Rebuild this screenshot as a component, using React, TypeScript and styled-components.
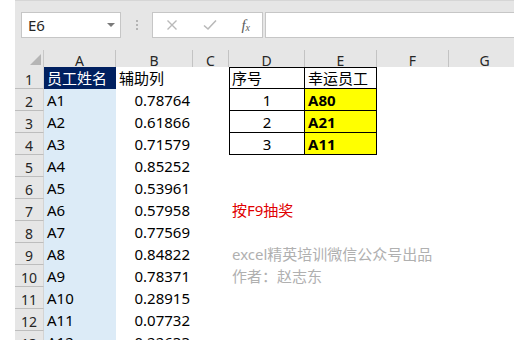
import React from "react";
import styled, { createGlobalStyle } from "styled-components";

const GlobalStyle = createGlobalStyle`
  html, body {
    margin: 0;
    padding: 0;
    background: #ffffff;
    overflow: hidden;
  }
  body {
    font-family: "Noto Sans", "Noto Sans CJK SC", sans-serif;
  }
`;

const COLS = [29, 72, 77, 36, 76, 72, 72, 72];
const LETTERS = ["A", "B", "C", "D", "E", "F", "G"];

type CellSpec = {
    t?: string;
    fill?: string;
    color?: string;
    align?: "left" | "right" | "center";
    bold?: boolean;
    box?: { top?: boolean; left?: boolean };
};

const names = ["A1", "A2", "A3", "A4", "A5", "A6", "A7", "A8", "A9", "A10", "A11", "A12"];
const values = ["0.78764", "0.61866", "0.71579", "0.85252", "0.53961", "0.57958", "0.77569", "0.84822", "0.78371", "0.28915", "0.07732", "0.22633"];
const winners = ["A80", "A21", "A11"];

function buildRows(): CellSpec[][] {
    const rows: CellSpec[][] = [];
    rows.push([
        { t: "员工姓名", fill: "#002060", color: "#ffffff" },
        { t: "辅助列" },
        {},
        { t: "序号", box: { top: true, left: true } },
        { t: "幸运员工", box: { top: true } },
        {},
        {},
    ]);
    names.forEach((name, i) => {
        const row: CellSpec[] = [
            { t: name, fill: "#dcebf7" },
            { t: values[i], align: "right" },
            {},
        ];
        if (i < 3) {
            row.push({ t: String(i + 1), align: "center", box: { left: true } });
            row.push({ t: winners[i], bold: true, fill: "#ffff00", box: {} });
        } else if (i === 5) {
            row.push({ t: "按F9抽奖", color: "#e00000" });
            row.push({});
        } else if (i === 7) {
            row.push({ t: "excel精英培训微信公众号出品", color: "#b0b0b0" });
            row.push({});
        } else if (i === 8) {
            row.push({ t: "作者：赵志东", color: "#b0b0b0" });
            row.push({});
        } else {
            row.push({});
            row.push({});
        }
        row.push({});
        row.push({});
        rows.push(row);
    });
    return rows;
}

function boxShadow(box?: { top?: boolean; left?: boolean }): string {
    if (!box) return "none";
    const parts = ["inset -1px -1px 0 #000000"];
    if (box.top) parts.push("inset 0 1px 0 #000000");
    if (box.left) parts.push("inset 1px 0 0 #000000");
    return parts.join(", ");
}

function App(): React.ReactElement {
    const rows = buildRows();

    return (
        <Page>
            <GlobalStyle />
            <LeftStrip />
            <Main>
                <Toolbar>
                    <NameBox>
                        <span>E6</span>
                        <DropArrow />
                    </NameBox>
                    <Grip>
                        <i />
                        <i />
                        <i />
                    </Grip>
                    <FormulaButtons>
                        <svg width="12" height="12" viewBox="0 0 12 12">
                            <path d="M1.5 1.5 L10.5 10.5 M10.5 1.5 L1.5 10.5" stroke="#b9b9b9" strokeWidth="1.4" fill="none" />
                        </svg>
                        <svg width="14" height="12" viewBox="0 0 14 12">
                            <path d="M1 6.5 L5 10 L13 1.5" stroke="#b9b9b9" strokeWidth="1.6" fill="none" />
                        </svg>
                        <Fx>
                            f<sub>x</sub>
                        </Fx>
                    </FormulaButtons>
                    <FormulaInput />
                </Toolbar>
                <Sheet>
                    <Corner>
                        <svg width="11" height="11" viewBox="0 0 11 11">
                            <path d="M11 0 L11 11 L0 11 Z" fill="#b5b5b5" />
                        </svg>
                    </Corner>
                    {LETTERS.map((l) => (
                        <ColHeader key={l}>{l}</ColHeader>
                    ))}
                    {rows.map((row, r) => (
                        <React.Fragment key={r}>
                            <RowHeader>{r + 1}</RowHeader>
                            {row.map((c, ci) => (
                                <Cell
                                    key={ci}
                                    $fill={c.fill}
                                    $color={c.color}
                                    $align={c.align ?? "left"}
                                    $bold={c.bold}
                                    $shadow={boxShadow(c.box)}
                                >
                                    {c.t}
                                </Cell>
                            ))}
                        </React.Fragment>
                    ))}
                </Sheet>
            </Main>
        </Page>
    );
}

const Page = styled.div`
    display: flex;
    width: 514px;
    height: 340px;
    overflow: hidden;
    background: #ffffff;
`;

const LeftStrip = styled.div`
    width: 15px;
    flex: none;
    background: #ffffff;
`;

const Main = styled.div`
    flex: 1;
    display: flex;
    flex-direction: column;
    min-width: 0;
`;

const Toolbar = styled.div`
    height: 50px;
    flex: none;
    display: flex;
    align-items: flex-start;
    padding: 12px 0 0 6px;
    box-sizing: border-box;
    background: #e6e6e6;
    border-top: 1px solid #d6d6d6;
`;

const NameBox = styled.div`
    width: 100px;
    height: 26px;
    box-sizing: border-box;
    margin-top: -1px;
    background: #ffffff;
    border: 1px solid #c6c6c6;
    display: flex;
    align-items: center;
    justify-content: space-between;
    padding: 0 5px 0 6px;
    font-size: 15px;
    color: #262626;
`;

const DropArrow = styled.div`
    width: 0;
    height: 0;
    border-left: 4px solid transparent;
    border-right: 4px solid transparent;
    border-top: 4px solid #7a7a7a;
`;

const Grip = styled.div`
    width: 31px;
    height: 26px;
    margin-top: -1px;
    display: flex;
    flex-direction: column;
    align-items: center;
    justify-content: center;
    gap: 2px;

    i {
        display: block;
        width: 2px;
        height: 2px;
        background: #b4b4b4;
    }
`;

const FormulaButtons = styled.div`
    width: 111px;
    height: 26px;
    margin-top: -1px;
    box-sizing: border-box;
    background: #ffffff;
    border: 1px solid #c6c6c6;
    display: flex;
    align-items: center;
    justify-content: space-between;
    padding: 0 12px 0 13px;
`;

const Fx = styled.span`
    font-family: "Liberation Serif", serif;
    font-style: italic;
    font-size: 15px;
    color: #5a5a5a;
    line-height: 1;

    sub {
        font-size: 10px;
        vertical-align: -1px;
    }
`;

const FormulaInput = styled.div`
    flex: 1;
    height: 26px;
    margin-top: -1px;
    margin-left: 2px;
    box-sizing: border-box;
    background: #ffffff;
    border: 1px solid #c6c6c6;
    border-right: none;
`;

const Sheet = styled.div`
    display: grid;
    grid-template-columns: ${COLS.map((c) => `${c}px`).join(" ")};
    grid-template-rows: 17px repeat(13, 22px);
    background: #ffffff;
`;

const Corner = styled.div`
    background: #e6e6e6;
    border-right: 1px solid #c8c8c8;
    display: flex;
    align-items: flex-end;
    justify-content: flex-end;
    padding: 0 2px 2px 0;
`;

const ColHeader = styled.div`
    background: #e6e6e6;
    border-right: 1px solid #c3c3c3;
    display: flex;
    align-items: center;
    justify-content: center;
    font-size: 14px;
    line-height: 17px;
    color: #262626;
    padding-top: 3px;
    box-sizing: border-box;
`;

const RowHeader = styled.div`
    background: #e6e6e6;
    border-bottom: 1px solid #bdbdbd;
    border-right: 1px solid #d4d4d4;
    display: flex;
    align-items: center;
    justify-content: center;
    font-size: 14px;
    color: #262626;
    padding-top: 3px;
    box-sizing: border-box;
`;

const Cell = styled.div<{
    $fill?: string;
    $color?: string;
    $align: "left" | "right" | "center";
    $bold?: boolean;
    $shadow: string;
}>`
    background: ${(p) => p.$fill ?? "transparent"};
    color: ${(p) => p.$color ?? "#000000"};
    font-weight: ${(p) => (p.$bold ? 700 : 400)};
    text-align: ${(p) => p.$align};
    box-shadow: ${(p) => p.$shadow};
    font-size: 15px;
    line-height: 22px;
    padding: 0 3px;
    white-space: nowrap;
    overflow: visible;
    min-width: 0;
`;

export default App;
